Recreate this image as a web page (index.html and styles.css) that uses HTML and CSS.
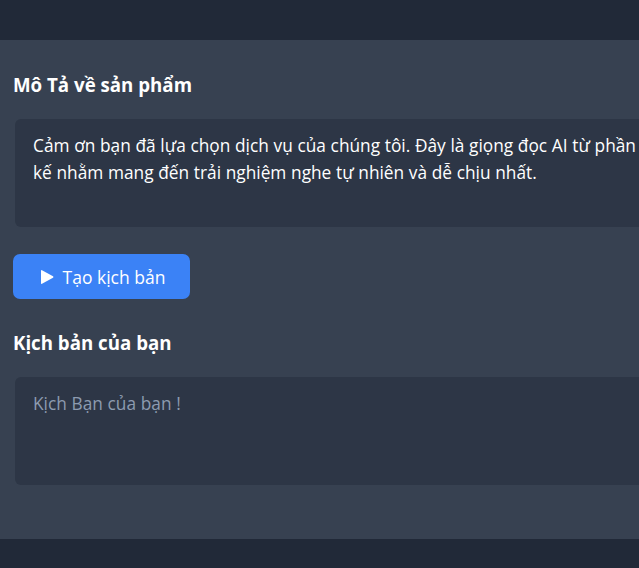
FILE: index.html
```html
<!DOCTYPE html>
<html lang="vi">
<head>
<meta charset="utf-8">
<title>Mô Tả về sản phẩm</title>
<link rel="stylesheet" href="styles.css">
</head>
<body>
<header class="topbar"></header>
<main class="panel">
  <section class="section">
    <h2 class="title">Mô Tả về sản phẩm</h2>
    <textarea class="box" rows="3" wrap="off">Cảm ơn bạn đã lựa chọn dịch vụ của chúng tôi. Đây là giọng đọc AI từ phần mềm được thiết
kế nhằm mang đến trải nghiệm nghe tự nhiên và dễ chịu nhất.</textarea>
  </section>
  <button class="btn" type="button">
    <svg class="play" width="14" height="16" viewBox="0 0 14 16"><path d="M2 1.2 L13 7.2 Q14 8 13 8.8 L2 14.8 Q1 15.3 1 14.2 V1.8 Q1 0.7 2 1.2 Z" fill="#fff"/></svg>
    <span>Tạo kịch bản</span>
  </button>
  <section class="section">
    <h2 class="title">Kịch bản của bạn</h2>
    <textarea class="box" rows="3" wrap="off" placeholder="Kịch Bạn của bạn !"></textarea>
  </section>
</main>
<footer class="bottombar"></footer>
</body>
</html>
```
FILE: styles.css
```css
html, body {
  margin: 0;
  padding: 0;
  background: #212938;
  overflow: hidden;
}
body {
  font-family: "Open Sans", "Noto Sans", sans-serif;
  color: #fff;
  width: 639px;
  height: 568px;
}
.topbar {
  height: 40px;
  background: #212938;
}
.panel {
  background: #374151;
  padding: 32px 0 54px 13px;
  display: flex;
  flex-direction: column;
  align-items: flex-start;
  overflow: hidden;
}
.section {
  display: flex;
  flex-direction: column;
  width: 100%;
}
.title {
  margin: 0 0 21px 0;
  font-size: 18.7px;
  line-height: 26px;
  font-weight: 700;
}
.box {
  margin: 0 0 0 2px;
  box-sizing: border-box;
  width: calc(100% + 40px);
  height: 108px;
  padding: 13px 16px 13px 18px;
  background: #2d3646;
  border: none;
  border-radius: 6px;
  color: #fff;
  font-family: inherit;
  font-size: 17.3px;
  word-spacing: 0.2px;
  line-height: 27px;
  resize: none;
  outline: none;
  overflow: hidden;
}
.box::placeholder {
  color: #8c9bb0;
}
.btn {
  margin: 27px 0 31px 0;
  height: 45px;
  width: 177px;
  display: flex;
  align-items: center;
  justify-content: center;
  gap: 9px;
  background: #3b82f6;
  border: none;
  border-radius: 7px;
  color: #fff;
  font-family: inherit;
  font-size: 17.5px;
  padding: 0 0 0 2px;
}
.bottombar {
  height: 40px;
  background: #212938;
}
```
